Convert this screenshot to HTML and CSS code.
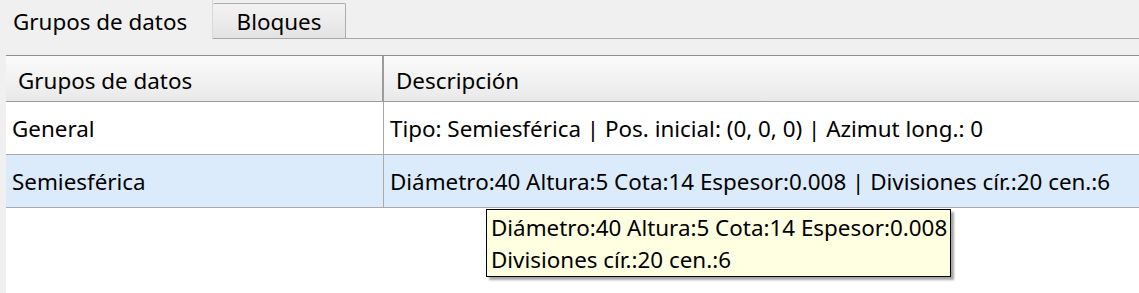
FILE: index.html
```html
<!DOCTYPE html>
<html lang="es">
<head>
<meta charset="utf-8">
<title>Grupos de datos</title>
<link rel="stylesheet" href="styles.css">
</head>
<body>
<div class="window">
  <div class="tabs">
    <div class="tab active">Grupos de datos</div>
    <div class="tab">Bloques</div>
    <div class="tab-fill"></div>
  </div>
  <div class="panel">
    <div class="table">
      <div class="row head">
        <div class="cell c1">Grupos de datos</div>
        <div class="cell c2">Descripción</div>
      </div>
      <div class="row">
        <div class="cell c1">General</div>
        <div class="cell c2">Tipo: Semiesférica | Pos. inicial: (0, 0, 0) | Azimut long.: 0</div>
      </div>
      <div class="row selected">
        <div class="cell c1">Semiesférica</div>
        <div class="cell c2">Diámetro:40 Altura:5 Cota:14 Espesor:0.008 | Divisiones cír.:20 cen.:6</div>
      </div>
    </div>
    <div class="tooltip">
      <div>Diámetro:40 Altura:5 Cota:14 Espesor:0.008</div>
      <div>Divisiones cír.:20 cen.:6</div>
    </div>
  </div>
</div>
</body>
</html>
```
FILE: styles.css
```css
html, body {
  margin: 0;
  padding: 0;
}
body {
  background: #f0f0f0;
  font-family: "Noto Sans", "Open Sans", sans-serif;
  font-size: 22.4px;
  color: #000;
  width: 1139px;
  height: 293px;
  overflow: hidden;
}
.window {
  position: relative;
  height: 293px;
}
.tabs {
  display: flex;
  align-items: flex-end;
  height: 39px;
}
.tab {
  box-sizing: border-box;
  height: 36px;
  display: flex;
  align-items: center;
  border: 1px solid #adadad;
  border-radius: 2px 2px 0 0;
  background: linear-gradient(#f3f3f3, #e3e3e3);
}
.tab.active {
  height: 39px;
  width: 213px;
  padding: 3px 0 0 13px;
  border-color: #d9d9d9;
  border-left: none;
  border-top: none;
  border-bottom: none;
  background: #f0f0f0;
  border-radius: 0;
}
.tab:not(.active) {
  width: 133px;
  justify-content: center;
  padding: 1px 0 0 0;
  border-left: none;
  border-bottom: 1px solid #a8a8a8;
}
.tab-fill {
  flex: 1;
  height: 1px;
  background: #a8a8a8;
}
.panel {
  margin: 16px 0 0 6px;
  background: #fff;
  height: 238px;
}
.table {
  display: flex;
  flex-direction: column;
}
.row {
  display: flex;
  height: 53px;
  box-sizing: border-box;
  border-bottom: 1px solid #a9a9a9;
}
.row.head {
  height: 47px;
  border-top: 1px solid #8f8f8f;
  border-bottom: 1px solid #9c9c9c;
  background: linear-gradient(#fbfbfb, #e9e9e9);
}
.row.selected {
  background: #dcebfc;
}
.cell {
  display: flex;
  align-items: center;
  box-sizing: border-box;
  white-space: nowrap;
}
.c1 {
  width: 378px;
  padding-left: 6px;
  border-right: 1px solid #a9a9a9;
}
.head .cell {
  padding-top: 3px;
}
.head .c1 {
  padding-left: 12px;
  border-right: 2px solid #9c9c9c;
}
.c2 {
  flex: 1;
  padding-left: 6px;
}
.head .c2 {
  padding-left: 12px;
}
.tooltip {
  position: absolute;
  left: 486px;
  top: 209px;
  width: 465px;
  height: 68px;
  box-sizing: border-box;
  background: #ffffe1;
  border: 1px solid #000;
  box-shadow: 3px 3px 2px rgba(0, 0, 0, 0.35);
  padding: 2px 4px 0;
  line-height: 32px;
  white-space: nowrap;
}
```
